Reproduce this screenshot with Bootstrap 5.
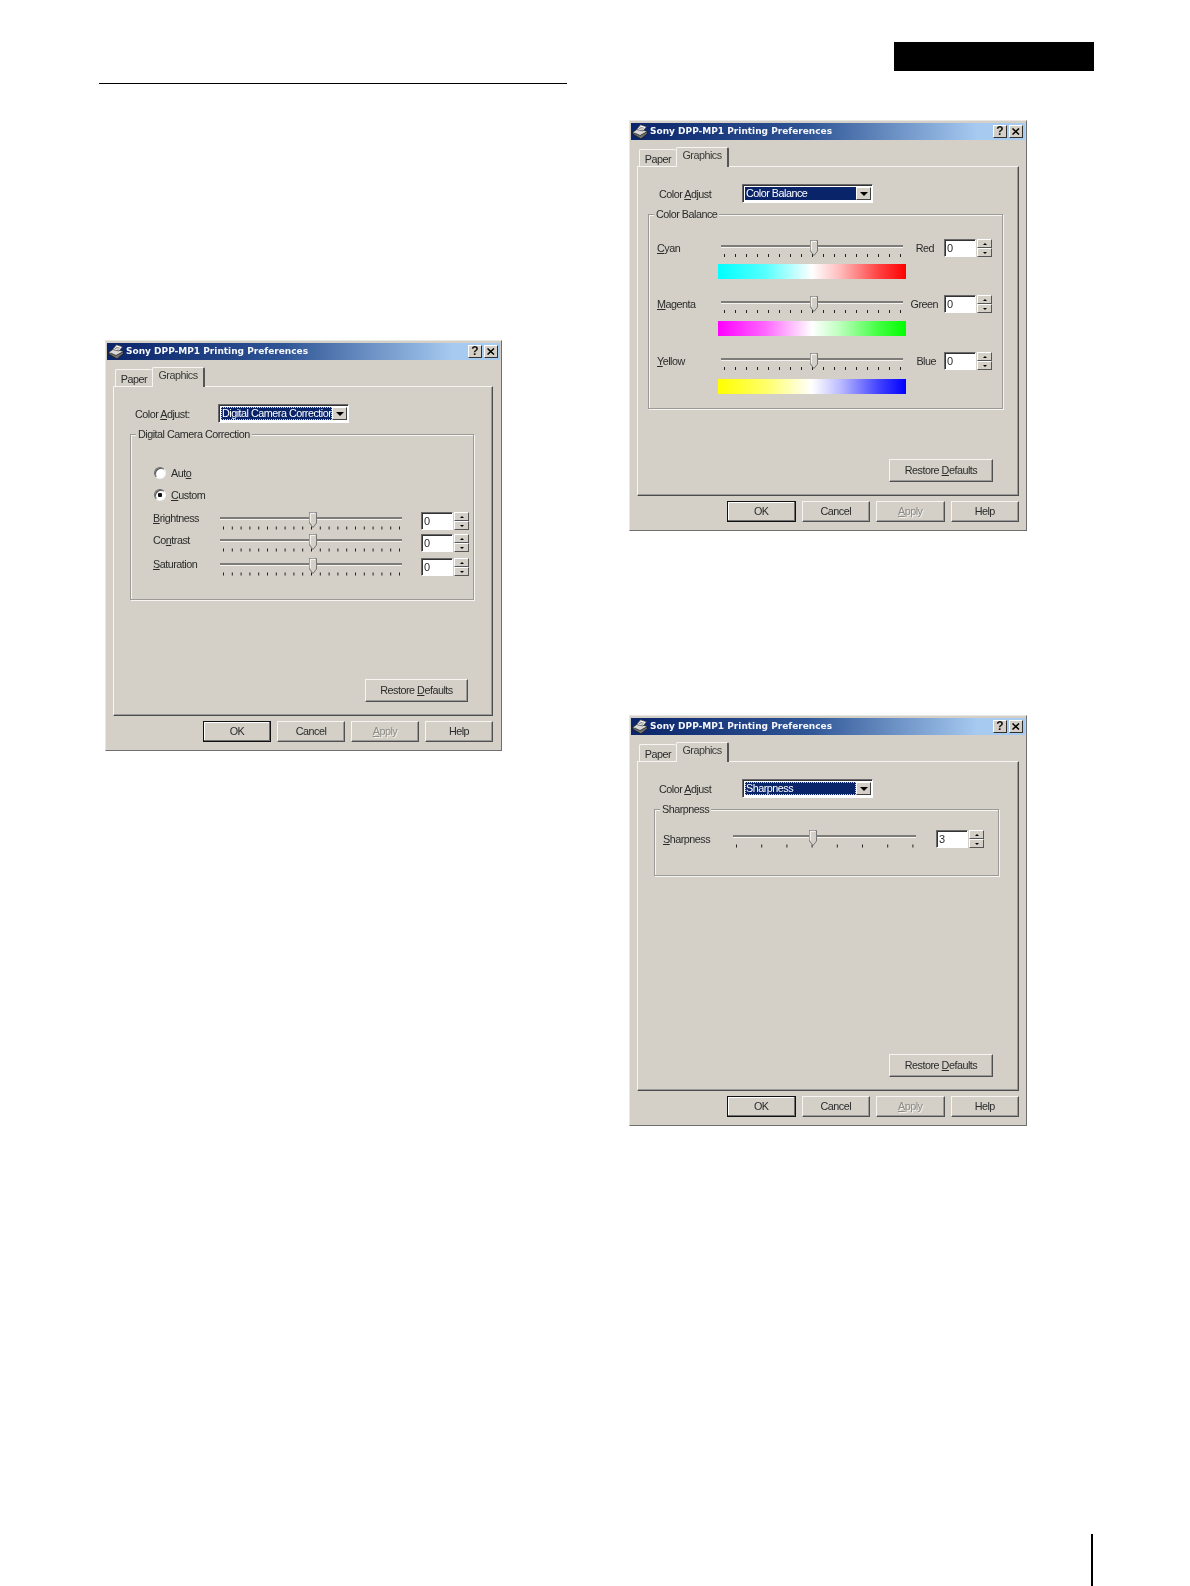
<!doctype html>
<html lang="en">
<head>
<meta charset="utf-8">
<title>Sony DPP-MP1 Printing Preferences</title>
<link href="https://cdn.jsdelivr.net/npm/bootstrap@5.3.0/dist/css/bootstrap.min.css" rel="stylesheet">
<style>
html,body{margin:0;background:#fff;}
.sheet{width:1190px;height:1586px;overflow:hidden;}
.lcol{margin-left:99px;width:468px;flex:none;}
.rcol{margin-left:62px;width:470px;flex:none;}
.rule{height:1px;background:#000;margin-top:83px;}
.blackbox{width:200px;height:29px;background:#000;margin:42px 0 0 265px;}
.folio{width:1.5px;height:52px;background:#000;margin:408px 0 0 462px;}
.d1pos{margin:256px 0 0 6px;}
.d2pos{margin-top:49px;}
.d3pos{margin-top:184px;}

.dlg{width:398px;height:411px;flex:none;background:#d4d0c8;padding:2px 1px 0;border:1px solid;border-color:#e9e7e2 #6f6f6f #6f6f6f #e9e7e2;
 font:10.8px/14px "Liberation Sans",Arial,sans-serif;letter-spacing:-.5px;color:#2b2b2b;filter:blur(.3px);}
.dlg.narrow{width:397px;}
.ttl{height:17px;background:linear-gradient(90deg,#0a246a 0%,#2f5596 45%,#a6caf0 88%);padding:0 2px 0 1px;color:#f4f6fa;
 font:bold 9px/17px "DejaVu Sans",sans-serif;letter-spacing:0;white-space:nowrap;}
.ttlbtn{width:14px;height:13px;background:#d4d0c8;border:1px solid;border-color:#fff #303030 #303030 #fff;color:#111;
 font:bold 12px/11px "Liberation Sans",sans-serif;text-align:center;margin-left:2px;}
.ttlbtn svg{display:block;margin:2px auto 0;}
.ttlico{flex:none;margin-right:2px;}
.wintabs.nav-tabs{border:0;height:19px;margin:7px 0 0 8px;align-items:flex-end;position:relative;z-index:1;--bs-nav-tabs-border-width:0;}
.wintabs .nav-link,.wintabs .nav-link.active{font-size:10.8px;line-height:13px;color:#2b2b2b;border-radius:2px 2px 0 0;background:#d4d0c8;padding:2px 0 0;text-align:center;
 border:0;border-top:1px solid #f6f5f2;border-left:1px solid #f6f5f2;margin:0;}
.wintabs .tpaper{width:37px;height:17px;padding-top:3px;}
.wintabs .tgraph.active{width:53px;height:20px;margin-bottom:-1px;border-right:2px solid #555;color:#3a3a3a;padding-top:1px;}
.tabpane{margin-left:6px;width:382px;height:330px;background:#d4d0c8;border:1px solid;border-color:#f6f5f2 #4c4c4c #4c4c4c #f6f5f2;box-shadow:inset -1px -1px #9a9a9a;}
.narrow .tabpane{width:380px;}
.comborow{padding-left:21px;margin-top:17px;height:19px;}
.lblcombo{width:83px;}
.combo{width:131px;height:19px;background:#fff;border:1px solid;border-color:#6a6a6a #fff #fff #6a6a6a;box-shadow:inset 1px 1px #333;padding:2px 1px 2px 2px;}
.combosel{flex:1;min-width:0;background:#0a246a;color:#fff;padding-left:1px;line-height:13px;white-space:nowrap;}
.combosel.dots{outline:1px dotted #c9cfe0;outline-offset:-1px;}
.comboarr{width:15px;flex:none;background:#d4d0c8;border:1px solid;border-color:#fff #404040 #404040 #fff;}
.comboarr i,.spinup i,.spindn i{display:block;width:0;height:0;border-style:solid;border-color:transparent;}
.comboarr i{border-width:4px 4px 0;border-top-color:#000;}
.grp{margin:4px 0 0 16px;padding:0;border:1px solid #9b9a96;box-shadow:inset 1px 1px #f6f5f2,1px 1px #f6f5f2;flex:none;}
.grp legend{float:none;width:auto;margin:0 0 0 5px;padding:1px 2px 0;font-size:10.8px;line-height:13px;background:#d4d0c8;}
.g1{width:344px;height:173px;}
.g2{width:355px;height:202px;margin-left:10px;}
.g3{width:345px;height:74px;}
.radrow{height:16px;padding-left:23px;}
.radfirst{margin-top:24px;}
.radsecond{margin-top:6px;margin-bottom:9px;}
.rad{width:12px;height:12px;border-radius:50%;background:#fff;border:1px solid;border-color:#6a6a6a #f4f4f4 #f4f4f4 #6a6a6a;box-shadow:inset 1px 1px #555;margin-right:5px;}
.rad.on{background:radial-gradient(circle,#111 0 2px,#fff 2.5px);}
.slrow{height:18px;align-items:flex-start;}
.slrow svg{display:block;flex:none;}
.s1{padding-left:22px;}
.s1 + .s1{margin-top:4px;}
.s1.last{margin-top:6px;}
.s1 .sllabel{width:67px;margin-top:-1px;}
.s1 .edit{margin-left:19px;}
.s2{padding-left:8px;}
.s2 .sllabel{width:64px;padding-top:2px;}
.sideL{width:31px;text-align:right;padding-top:2px;margin-right:10px;}
.sideL.sgreen{width:35px;margin-right:6px;}
.sideL.sblue{width:33px;margin-right:8px;}
.s2first{margin-top:18px;}
.s2next{margin-top:16px;}
.s3{padding-left:8px;margin-top:14px;}
.s3 .sllabel{width:70px;padding-top:2px;}
.s3 .edit{margin-left:20px;}
.edit{width:32px;height:18px;background:#fff;border:1px solid;border-color:#6a6a6a #fff #fff #6a6a6a;box-shadow:inset 1px 1px #333;padding:1px 0 0 2px;line-height:14px;font-size:11px;flex:none;}
.spin{width:15px;height:18px;margin-left:1px;flex:none;}
.spinup,.spindn{height:9px;background:#d4d0c8;border:1px solid;border-color:#fff #555 #555 #fff;}
.spinup i{border-width:0 2px 2px;border-bottom-color:#000;}
.spindn i{border-width:2px 2px 0;border-top-color:#000;}
.cbar{height:15px;width:188px;margin-top:7px;margin-left:69px;}
.cbar.m8{margin-top:8px;}
.cbar.m9{margin-top:9px;}
.grad1{background:linear-gradient(90deg,#0ff 0%,#5ff 25%,#fff 50%,#fbb 65%,#f44 85%,#f00 100%);}
.grad2{background:linear-gradient(90deg,#f0f 0%,#f6f 25%,#fff 50%,#bfb 65%,#4f4 85%,#0f0 100%);}
.grad3{background:linear-gradient(90deg,#ff0 0%,#ff6 25%,#fff 50%,#bbf 65%,#44f 85%,#00f 100%);}
.btn.winb{--bs-btn-padding-x:0;--bs-btn-padding-y:0;--bs-btn-font-size:10.8px;--bs-btn-line-height:14px;--bs-btn-border-radius:0;--bs-btn-color:#2b2b2b;
 background:#d4d0c8;color:#2b2b2b;letter-spacing:-.5px;border:1px solid;border-color:#f6f5f2 #505050 #505050 #f6f5f2;box-shadow:inset -1px -1px #9a9a9a;padding-bottom:2px;}
.btn.restore{width:104px;height:23px;align-self:flex-end;margin:auto 25px 13px 0;}
.narrow .btn.restore{width:103px;margin-right:24px;}
.btnrow{margin:5px 0 0 0;padding-right:6px;gap:6px;}
.narrow .btnrow{padding-right:7px;}
.btn.foot{width:68.5px;height:21px;}
.narrow .btn.foot{width:68px;}
.btn.deflt{border:1px solid #111;box-shadow:inset -1px -1px #707070,inset 1px 1px #fff;}
.btn.off,.btn.off:disabled{color:#8d8b85;opacity:1;text-shadow:1px 1px #f3f2ef;background:#d4d0c8;border-color:#f6f5f2 #505050 #505050 #f6f5f2;}
</style>
</head>
<body>
<svg width="0" height="0" class="position-absolute">
 <defs>
  <symbol id="printer" viewBox="0 0 16 16">
   <path d="M0.5 10 L9 15 L15.5 9.5 L15.5 7.5 L8 11 L0.5 8z" fill="#6f6f6f" stroke="#111" stroke-width=".7"/>
   <path d="M0.5 8.5 L6 4.5 L15.5 7.5 L8 11.5z" fill="#d8d8d8" stroke="#222" stroke-width=".7"/>
   <path d="M4.5 5.5 L8.5 .8 L14.5 2.8 L11 7z" fill="#fff" stroke="#333" stroke-width=".7"/>
   <path d="M6.5 4.2 L11 5.4 M7.6 3 L12 4.2 M3 9 L8 11.5" stroke="#666" stroke-width=".7"/>
  </symbol>
  <symbol id="thumb" viewBox="0 0 8 16">
   <path d="M.5 .5 H7.5 V11 L4 15.5 L.5 11z" fill="#d4d0c8" stroke="#777"/>
   <path d="M1.2 1.2 H6.5 M1.2 1.2 V10.5" stroke="#fff" fill="none"/>
  </symbol>
  <symbol id="xmark" viewBox="0 0 8 7">
   <path d="M.5 .5 L7 6.5 M7 .5 L.5 6.5" stroke="#000" stroke-width="1.5"/>
  </symbol>
  <g id="trk1"><line x1="0" y1="6" x2="182" y2="6" stroke="#7d7c78" stroke-width="2"/><line x1="0" y1="7.5" x2="182" y2="7.5" stroke="#f4f3f0"/><line x1="3" y1="16" x2="181" y2="16" stroke="#222" stroke-width="3" stroke-dasharray="1 7.8"/><use href="#thumb" x="89" y="0" width="8" height="16"/></g>
  <g id="trk2"><line x1="0" y1="7" x2="182" y2="7" stroke="#7d7c78" stroke-width="2"/><line x1="0" y1="8.5" x2="182" y2="8.5" stroke="#f4f3f0"/><line x1="3" y1="16.5" x2="180.5" y2="16.5" stroke="#222" stroke-width="3" stroke-dasharray="1 10"/><use href="#thumb" x="89" y="1" width="8" height="16"/></g>
  <g id="trk3"><line x1="0" y1="6" x2="183" y2="6" stroke="#7d7c78" stroke-width="2"/><line x1="0" y1="7.5" x2="183" y2="7.5" stroke="#f4f3f0"/><line x1="3" y1="16" x2="181" y2="16" stroke="#222" stroke-width="3" stroke-dasharray="1 24.2"/><use href="#thumb" x="76" y="0" width="8" height="16"/></g>
 </defs>
</svg>

<main class="sheet d-flex align-items-start">
 <section class="lcol">
  <div class="rule"></div>

  <article class="dlg narrow d1pos d-flex flex-column">
   <header class="ttl d-flex align-items-center">
    <svg width="16" height="16" class="ttlico"><use href="#printer"/></svg>
    <span class="flex-grow-1">Sony DPP-MP1 Printing Preferences</span>
    <span class="ttlbtn">?</span><span class="ttlbtn"><svg width="8" height="7"><use href="#xmark"/></svg></span>
   </header>
   <ul class="nav nav-tabs wintabs">
    <li class="nav-item"><a class="nav-link tpaper">Paper</a></li>
    <li class="nav-item"><a class="nav-link tgraph active">Graphics</a></li>
   </ul>
   <div class="tabpane d-flex flex-column">
    <div class="comborow d-flex align-items-center">
     <span class="lblcombo">Color <u>A</u>djust:</span>
     <div class="combo d-flex"><span class="combosel dots">Digital Camera Correction</span><span class="comboarr d-flex align-items-center justify-content-center"><i></i></span></div>
    </div>
    <fieldset class="grp g1">
     <legend>Digital Camera Correction</legend>
     <div class="radrow radfirst d-flex align-items-center"><span class="rad"></span><span>Aut<u>o</u></span></div>
     <div class="radrow radsecond d-flex align-items-center"><span class="rad on"></span><span><u>C</u>ustom</span></div>
     <div class="slrow s1 d-flex"><span class="sllabel"><u>B</u>rightness</span>
      <svg width="182" height="18"><use href="#trk1"/></svg>
      <span class="edit">0</span><div class="spin"><div class="spinup d-flex align-items-center justify-content-center"><i></i></div><div class="spindn d-flex align-items-center justify-content-center"><i></i></div></div></div>
     <div class="slrow s1 d-flex"><span class="sllabel">Co<u>n</u>trast</span>
      <svg width="182" height="18"><use href="#trk1"/></svg>
      <span class="edit">0</span><div class="spin"><div class="spinup d-flex align-items-center justify-content-center"><i></i></div><div class="spindn d-flex align-items-center justify-content-center"><i></i></div></div></div>
     <div class="slrow s1 last d-flex"><span class="sllabel"><u>S</u>aturation</span>
      <svg width="182" height="18"><use href="#trk1"/></svg>
      <span class="edit">0</span><div class="spin"><div class="spinup d-flex align-items-center justify-content-center"><i></i></div><div class="spindn d-flex align-items-center justify-content-center"><i></i></div></div></div>
    </fieldset>
    <button type="button" class="btn winb restore">Restore <u>D</u>efaults</button>
   </div>
   <div class="btnrow d-flex justify-content-end">
    <button type="button" class="btn winb foot deflt">OK</button>
    <button type="button" class="btn winb foot">Cancel</button>
    <button type="button" class="btn winb foot off" disabled><u>A</u>pply</button>
    <button type="button" class="btn winb foot">Help</button>
   </div>
  </article>
 </section>

 <section class="rcol">
  <div class="blackbox"></div>

  <article class="dlg d2pos d-flex flex-column">
   <header class="ttl d-flex align-items-center">
    <svg width="16" height="16" class="ttlico"><use href="#printer"/></svg>
    <span class="flex-grow-1">Sony DPP-MP1 Printing Preferences</span>
    <span class="ttlbtn">?</span><span class="ttlbtn"><svg width="8" height="7"><use href="#xmark"/></svg></span>
   </header>
   <ul class="nav nav-tabs wintabs">
    <li class="nav-item"><a class="nav-link tpaper">Paper</a></li>
    <li class="nav-item"><a class="nav-link tgraph active">Graphics</a></li>
   </ul>
   <div class="tabpane d-flex flex-column">
    <div class="comborow d-flex align-items-center">
     <span class="lblcombo">Color <u>A</u>djust</span>
     <div class="combo d-flex"><span class="combosel">Color Balance</span><span class="comboarr d-flex align-items-center justify-content-center"><i></i></span></div>
    </div>
    <fieldset class="grp g2">
     <legend>Color Balance</legend>
     <div class="slrow s2 s2first d-flex"><span class="sllabel"><u>C</u>yan</span>
      <svg width="182" height="19"><use href="#trk2"/></svg>
      <span class="sideL">Red</span><span class="edit">0</span><div class="spin"><div class="spinup d-flex align-items-center justify-content-center"><i></i></div><div class="spindn d-flex align-items-center justify-content-center"><i></i></div></div></div>
     <div class="cbar grad1"></div>
     <div class="slrow s2 s2next d-flex"><span class="sllabel"><u>M</u>agenta</span>
      <svg width="182" height="19"><use href="#trk2"/></svg>
      <span class="sideL sgreen">Green</span><span class="edit">0</span><div class="spin"><div class="spinup d-flex align-items-center justify-content-center"><i></i></div><div class="spindn d-flex align-items-center justify-content-center"><i></i></div></div></div>
     <div class="cbar m8 grad2"></div>
     <div class="slrow s2 s2next d-flex"><span class="sllabel"><u>Y</u>ellow</span>
      <svg width="182" height="19"><use href="#trk2"/></svg>
      <span class="sideL sblue">Blue</span><span class="edit">0</span><div class="spin"><div class="spinup d-flex align-items-center justify-content-center"><i></i></div><div class="spindn d-flex align-items-center justify-content-center"><i></i></div></div></div>
     <div class="cbar m9 grad3"></div>
    </fieldset>
    <button type="button" class="btn winb restore">Restore <u>D</u>efaults</button>
   </div>
   <div class="btnrow d-flex justify-content-end">
    <button type="button" class="btn winb foot deflt">OK</button>
    <button type="button" class="btn winb foot">Cancel</button>
    <button type="button" class="btn winb foot off" disabled><u>A</u>pply</button>
    <button type="button" class="btn winb foot">Help</button>
   </div>
  </article>

  <article class="dlg d3pos d-flex flex-column">
   <header class="ttl d-flex align-items-center">
    <svg width="16" height="16" class="ttlico"><use href="#printer"/></svg>
    <span class="flex-grow-1">Sony DPP-MP1 Printing Preferences</span>
    <span class="ttlbtn">?</span><span class="ttlbtn"><svg width="8" height="7"><use href="#xmark"/></svg></span>
   </header>
   <ul class="nav nav-tabs wintabs">
    <li class="nav-item"><a class="nav-link tpaper">Paper</a></li>
    <li class="nav-item"><a class="nav-link tgraph active">Graphics</a></li>
   </ul>
   <div class="tabpane d-flex flex-column">
    <div class="comborow d-flex align-items-center">
     <span class="lblcombo">Color <u>A</u>djust</span>
     <div class="combo d-flex"><span class="combosel dots">Sharpness</span><span class="comboarr d-flex align-items-center justify-content-center"><i></i></span></div>
    </div>
    <fieldset class="grp g3">
     <legend>Sharpness</legend>
     <div class="slrow s3 d-flex"><span class="sllabel"><u>S</u>harpness</span>
      <svg width="183" height="18"><use href="#trk3"/></svg>
      <span class="edit">3</span><div class="spin"><div class="spinup d-flex align-items-center justify-content-center"><i></i></div><div class="spindn d-flex align-items-center justify-content-center"><i></i></div></div></div>
    </fieldset>
    <button type="button" class="btn winb restore">Restore <u>D</u>efaults</button>
   </div>
   <div class="btnrow d-flex justify-content-end">
    <button type="button" class="btn winb foot deflt">OK</button>
    <button type="button" class="btn winb foot">Cancel</button>
    <button type="button" class="btn winb foot off" disabled><u>A</u>pply</button>
    <button type="button" class="btn winb foot">Help</button>
   </div>
  </article>

  <div class="folio"></div>
 </section>
</main>
<script src="https://cdn.jsdelivr.net/npm/bootstrap@5.3.0/dist/js/bootstrap.bundle.min.js"></script>
</body>
</html>
